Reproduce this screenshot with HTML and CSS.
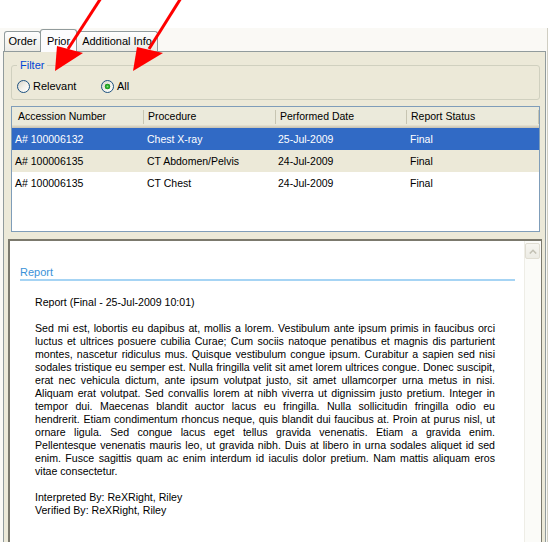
FILE: index.html
```html
<!DOCTYPE html>
<html>
<head>
<meta charset="utf-8">
<link rel="stylesheet" href="styles.css">
</head>
<body>
<div class="window">
  <div class="tabs">
    <div class="tab tab-order">Order</div>
    <div class="tab tab-prior">Prior</div>
    <div class="tab tab-info">Additional Info</div>
  </div>
  <div class="panel">
    <div class="top">
      <fieldset class="filter">
        <legend>Filter</legend>
        <div class="opts">
          <label class="opt opt-relevant"><span class="radio"></span>Relevant</label>
          <label class="opt"><span class="radio checked"></span>All</label>
        </div>
      </fieldset>
      <div class="list">
        <div class="lhead">
          <div class="hc c1 first">Accession Number</div>
          <div class="hc c2">Procedure</div>
          <div class="hc c3">Performed Date</div>
          <div class="hc c4">Report Status</div>
        </div>
        <div class="row sel">
          <div class="c1">A# 100006132</div>
          <div class="c2">Chest X-ray</div>
          <div class="c3">25-Jul-2009</div>
          <div class="c4">Final</div>
        </div>
        <div class="row alt">
          <div class="c1">A# 100006135</div>
          <div class="c2">CT Abdomen/Pelvis</div>
          <div class="c3">24-Jul-2009</div>
          <div class="c4">Final</div>
        </div>
        <div class="row">
          <div class="c1">A# 100006135</div>
          <div class="c2">CT Chest</div>
          <div class="c3">24-Jul-2009</div>
          <div class="c4">Final</div>
        </div>
      </div>
    </div>
    <div class="report">
      <div class="rcontent">
        <div class="rlabel">Report</div>
        <div class="rbody">
          <p>Report (Final - 25-Jul-2009 10:01)</p>
          <p>
            <span class="jl">Sed mi est, lobortis eu dapibus at, mollis a lorem. Vestibulum ante ipsum primis in faucibus orci</span>
            <span class="jl">luctus et ultrices posuere cubilia Curae; Cum sociis natoque penatibus et magnis dis parturient</span>
            <span class="jl">montes, nascetur ridiculus mus. Quisque vestibulum congue ipsum. Curabitur a sapien sed nisi</span>
            <span class="jl">sodales tristique eu semper est. Nulla fringilla velit sit amet lorem ultrices congue. Donec suscipit,</span>
            <span class="jl">erat nec vehicula dictum, ante ipsum volutpat justo, sit amet ullamcorper urna metus in nisi.</span>
            <span class="jl">Aliquam erat volutpat. Sed convallis lorem at nibh viverra ut dignissim justo pretium. Integer in</span>
            <span class="jl">tempor dui. Maecenas blandit auctor lacus eu fringilla. Nulla sollicitudin fringilla odio eu</span>
            <span class="jl">hendrerit. Etiam condimentum rhoncus neque, quis blandit dui faucibus at. Proin at purus nisl, ut</span>
            <span class="jl">ornare ligula. Sed congue lacus eget tellus gravida venenatis. Etiam a gravida enim.</span>
            <span class="jl">Pellentesque venenatis mauris leo, ut gravida nibh. Duis at libero in urna sodales aliquet id sed</span>
            <span class="jl">enim. Fusce sagittis quam ac enim interdum id iaculis dolor pretium. Nam mattis aliquam eros</span>
            <span class="ll">vitae consectetur.</span>
          </p>
          <p>Interpreted By: ReXRight, Riley<br>Verified By: ReXRight, Riley</p>
        </div>
      </div>
      <div class="vscroll">
        <div class="up">
          <svg width="8" height="5" viewBox="0 0 8 5"><polyline points="0.8,4.5 4,1.3 7.2,4.5" fill="none" stroke="#c3c1b4" stroke-width="1.6"/></svg>
        </div>
      </div>
    </div>
  </div>
</div>
<svg class="arrows" width="200" height="80" viewBox="0 0 200 80">
  <line x1="101" y1="-2" x2="68" y2="49" stroke="#ff0000" stroke-width="3"/>
  <polygon points="55,71 57,46 83,53" fill="#ff0000"/>
  <line x1="181" y1="-2" x2="149" y2="49" stroke="#ff0000" stroke-width="3"/>
  <polygon points="133,71 137,47 163,53" fill="#ff0000"/>
</svg>
</body>
</html>
```
FILE: styles.css
```css
* { box-sizing: border-box; }
html, body { margin: 0; }
body {
  position: relative;
  width: 550px;
  height: 542px;
  overflow: hidden;
  background: #fff;
  font-family: "Liberation Sans", Arial, sans-serif;
  font-size: 11px;
  color: #000;
}

.window {
  margin-top: 28px;
  width: 548px;
  height: 514px;
  background: #faf9f5;
  border-right: 1px solid #d0cec2;
  display: flex;
  flex-direction: column;
}

.tabs {
  flex: none;
  height: 23px;
  display: flex;
  align-items: flex-end;
  padding-left: 4px;
  position: relative;
  z-index: 1;
}
.tab {
  height: 20px;
  line-height: 19px;
  text-align: center;
  border: 1px solid #919b9c;
  border-bottom: 0;
  border-radius: 3px 3px 0 0;
  background: linear-gradient(#fefefe, #ecebe5);
  white-space: nowrap;
}
.tab-order { width: 37px; }
.tab-prior {
  width: 37px;
  height: 23px;
  line-height: 22px;
  margin-left: -1px;
  margin-bottom: -1px;
  background: #fcfcfe;
  position: relative;
  z-index: 2;
}
.tab-info { width: 82px; margin-left: -1px; }

.panel {
  flex: 1;
  min-height: 0;
  margin-left: 3px;
  width: 543px;
  border: 1px solid #919b9c;
  border-bottom: 0;
  background: #ece9d8;
  display: flex;
  flex-direction: column;
}
.top { padding: 0 5px 0 7px; flex: none; }

.filter {
  margin: 7px 0 0;
  padding: 6px 5px 5px;
  border: 1px solid #d0d0bf;
  border-radius: 3px;
  min-width: 0;
}
.filter legend {
  padding: 0 3px;
  color: #0046d5;
  line-height: 13px;
}
.opts { display: flex; align-items: center; height: 16px; }
.opt { display: flex; align-items: center; gap: 3px; }
.opt-relevant { width: 84px; }
.radio {
  width: 13px;
  height: 13px;
  border-radius: 50%;
  border: 1px solid #1c5180;
  background: linear-gradient(135deg, #d8d5ca 0%, #f3f2ec 55%, #ffffff 100%);
}
.radio.checked {
  background:
    radial-gradient(circle at 50% 50%, #8be08b 0, #31b131 1.3px, #1d921d 2.6px, rgba(0,0,0,0) 3.1px),
    linear-gradient(135deg, #d8d5ca 0%, #f3f2ec 55%, #ffffff 100%);
}

.list {
  margin-top: 6px;
  height: 126px;
  border: 1px solid #7f9db9;
  background: #fff;
  font-size: 10.5px;
}
.lhead {
  display: flex;
  height: 21px;
  background: linear-gradient(#ebeadb 0, #ebeadb 18px, #e2decd 18px, #e2decd 19px, #d6d2c2 19px, #d6d2c2 20px, #cbc7b8 20px);
}
.c1 { width: 132px; }
.c2 { width: 132px; }
.c3 { width: 131px; }
.c4 { width: 132px; }
.hc {
  position: relative;
  padding-left: 4px;
  line-height: 19px;
  white-space: nowrap;
}
.hc.first { padding-left: 6px; }
.hc::after {
  content: "";
  position: absolute;
  right: 0;
  top: 3px;
  width: 1px;
  height: 14px;
  background: #c7c5b2;
}
.row { display: flex; height: 22px; line-height: 22px; white-space: nowrap; }
.row > div { padding-left: 3px; }
.row > .c3 { padding-left: 2px; }
.row.sel { background: #316ac5; color: #fff; }
.row.alt { background: #ece9d8; }

.report {
  flex: 1;
  min-height: 0;
  margin: 7px 3px 0 4px;
  display: flex;
  background: #fff;
  border-style: solid;
  border-color: #7b796d;
  border-width: 2px 1px 0 2px;
}
.rcontent { flex: 1; min-width: 0; padding-top: 25px; }
.rlabel {
  margin: 0 9px 0 10px;
  line-height: 13px;
  color: #3a92d8;
  border-bottom: 2px solid #a6d4f4;
}
.rbody {
  margin: 15px 0 0 25px;
  width: 460px;
  font-size: 10.6px;
  line-height: 13px;
}
.rbody p { margin: 0 0 13px; }
.jl { display: block; text-align: justify; text-align-last: justify; }
.ll { display: block; }

.vscroll {
  flex: none;
  width: 17px;
  padding-top: 2px;
  background: #fbfbf8;
  border-left: 1px solid #eeede6;
}
.up {
  height: 16px;
  width: 15px;
  border: 1px solid #e0ddd2;
  border-radius: 2px;
  background: linear-gradient(#f7f6f1, #ecebe4);
  display: flex;
  align-items: center;
  justify-content: center;
}

.arrows {
  position: absolute;
  left: 0;
  top: 0;
  z-index: 10;
  pointer-events: none;
}
```
